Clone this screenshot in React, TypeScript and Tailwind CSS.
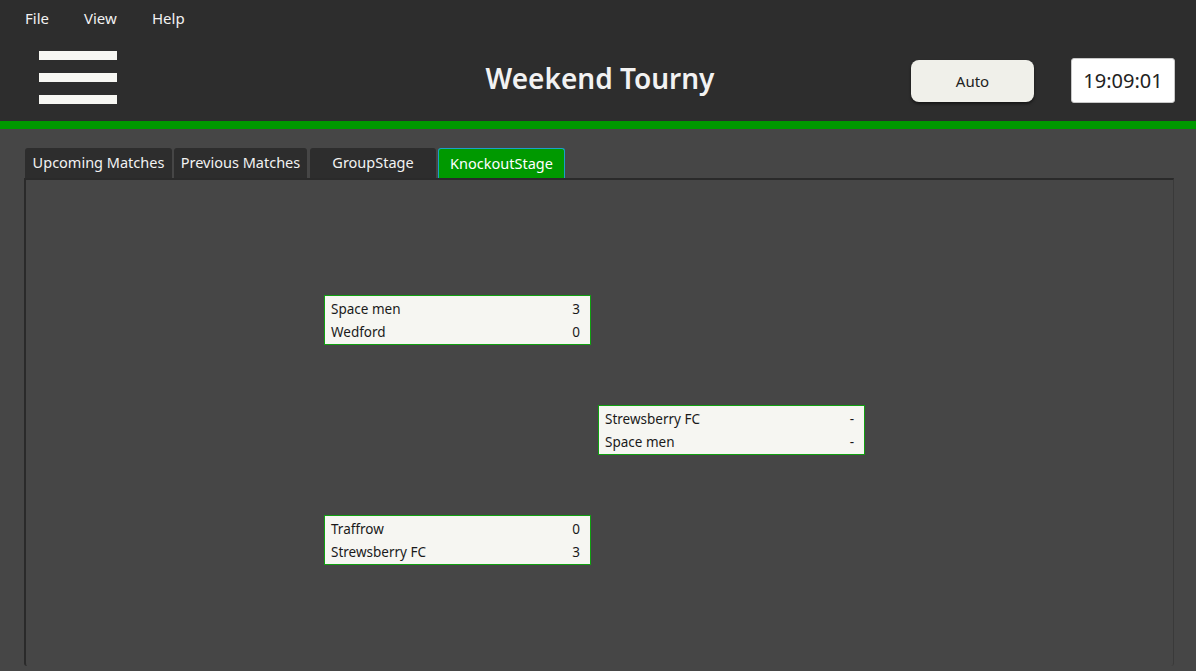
import React from "react";

type Match = { home: string; away: string; homeScore: string; awayScore: string };

const MatchCard = ({ m }: { m: Match }) => (
  <div className="w-[267px] h-[50px] bg-[#f6f6f2] border border-[#10a010] text-[13.5px] text-[#1a1a1a] flex flex-col pt-[2px]">
    <div className="h-6 flex items-center justify-between pl-[6px] pr-[10px]">
      <span>{m.home}</span>
      <span>{m.homeScore}</span>
    </div>
    <div className="h-6 flex items-center justify-between pl-[6px] pr-[10px]">
      <span>{m.away}</span>
      <span>{m.awayScore}</span>
    </div>
  </div>
);

const tabs = ["Upcoming Matches", "Previous Matches", "GroupStage", "KnockoutStage"];
const tabWidths = ["w-[147px]", "w-[133px]", "w-[126px]", "w-[127px]"];

export default function App() {
  return (
    <div
      className="w-[1196px] h-[671px] bg-[#464646] overflow-hidden flex flex-col"
      style={{ fontFamily: '"Noto Sans", "Open Sans", sans-serif' }}
    >
      <header className="bg-[#2d2d2d] h-[121px] flex flex-col">
        <nav className="flex h-[37px] items-center pl-[25px] text-[15px] text-[#f2f2f2]">
          <span className="w-[59px]">File</span>
          <span className="w-[68px]">View</span>
          <span>Help</span>
        </nav>
        <div className="flex-1 flex items-center">
          <div className="ml-[39px] w-[78px] flex flex-col gap-[13px] -mt-[4px]">
            <div className="h-[9px] bg-[#f7f7f3]" />
            <div className="h-[9px] bg-[#f7f7f3]" />
            <div className="h-[9px] bg-[#f7f7f3]" />
          </div>
          <h1 className="flex-1 text-center text-[28px] font-semibold text-[#f2f2f2] -mt-[3px] pl-[172px]">
            Weekend Tourny
          </h1>
          <button className="w-[123px] h-[42px] rounded-lg bg-[#f0f0ea] text-[15px] text-[#222] shadow-[0_2px_3px_rgba(0,0,0,0.5)] mt-[4px]">
            Auto
          </button>
          <div className="ml-[37px] mr-[21px] w-[104px] h-[45px] bg-white border border-[#c8c8c8] rounded-[3px] flex items-center justify-center text-[20px] text-[#222] mt-[3px]">
            19:09:01
          </div>
        </div>
      </header>
      <div className="h-[8px] bg-[#009900]" />
      <div className="flex-1 flex flex-col pt-[19px] pl-[24px] pr-[22px] pb-[5px]">
        <div className="flex gap-[2px] pl-[1px] h-[30px]">
          {tabs.map((t, i) => (
            <div
              key={t}
              className={`${tabWidths[i]} rounded-t-[3px] flex items-center justify-center text-[14.5px] ${
                i === 3
                  ? "bg-[#009900] border border-b-0 border-[#1aa0c8] text-white"
                  : "bg-[#2d2d2d] text-[#f2f2f2]"
              } ${i === 2 ? "ml-[1px]" : ""}`}
            >
              {t}
            </div>
          ))}
        </div>
        <div className="flex-1 border-l-2 border-t-2 border-r border-l-[#2a2a2a] border-t-[#2a2a2a] border-r-[#3a3a3a] rounded-b-[3px] flex items-start pl-[298px] pt-[115px]">
          <div className="flex items-center gap-[7px]">
            <div className="flex flex-col gap-[170px]">
              <MatchCard m={{ home: "Space men", away: "Wedford", homeScore: "3", awayScore: "0" }} />
              <MatchCard m={{ home: "Traffrow", away: "Strewsberry FC", homeScore: "0", awayScore: "3" }} />
            </div>
            <MatchCard m={{ home: "Strewsberry FC", away: "Space men", homeScore: "-", awayScore: "-" }} />
          </div>
        </div>
      </div>
    </div>
  );
}
